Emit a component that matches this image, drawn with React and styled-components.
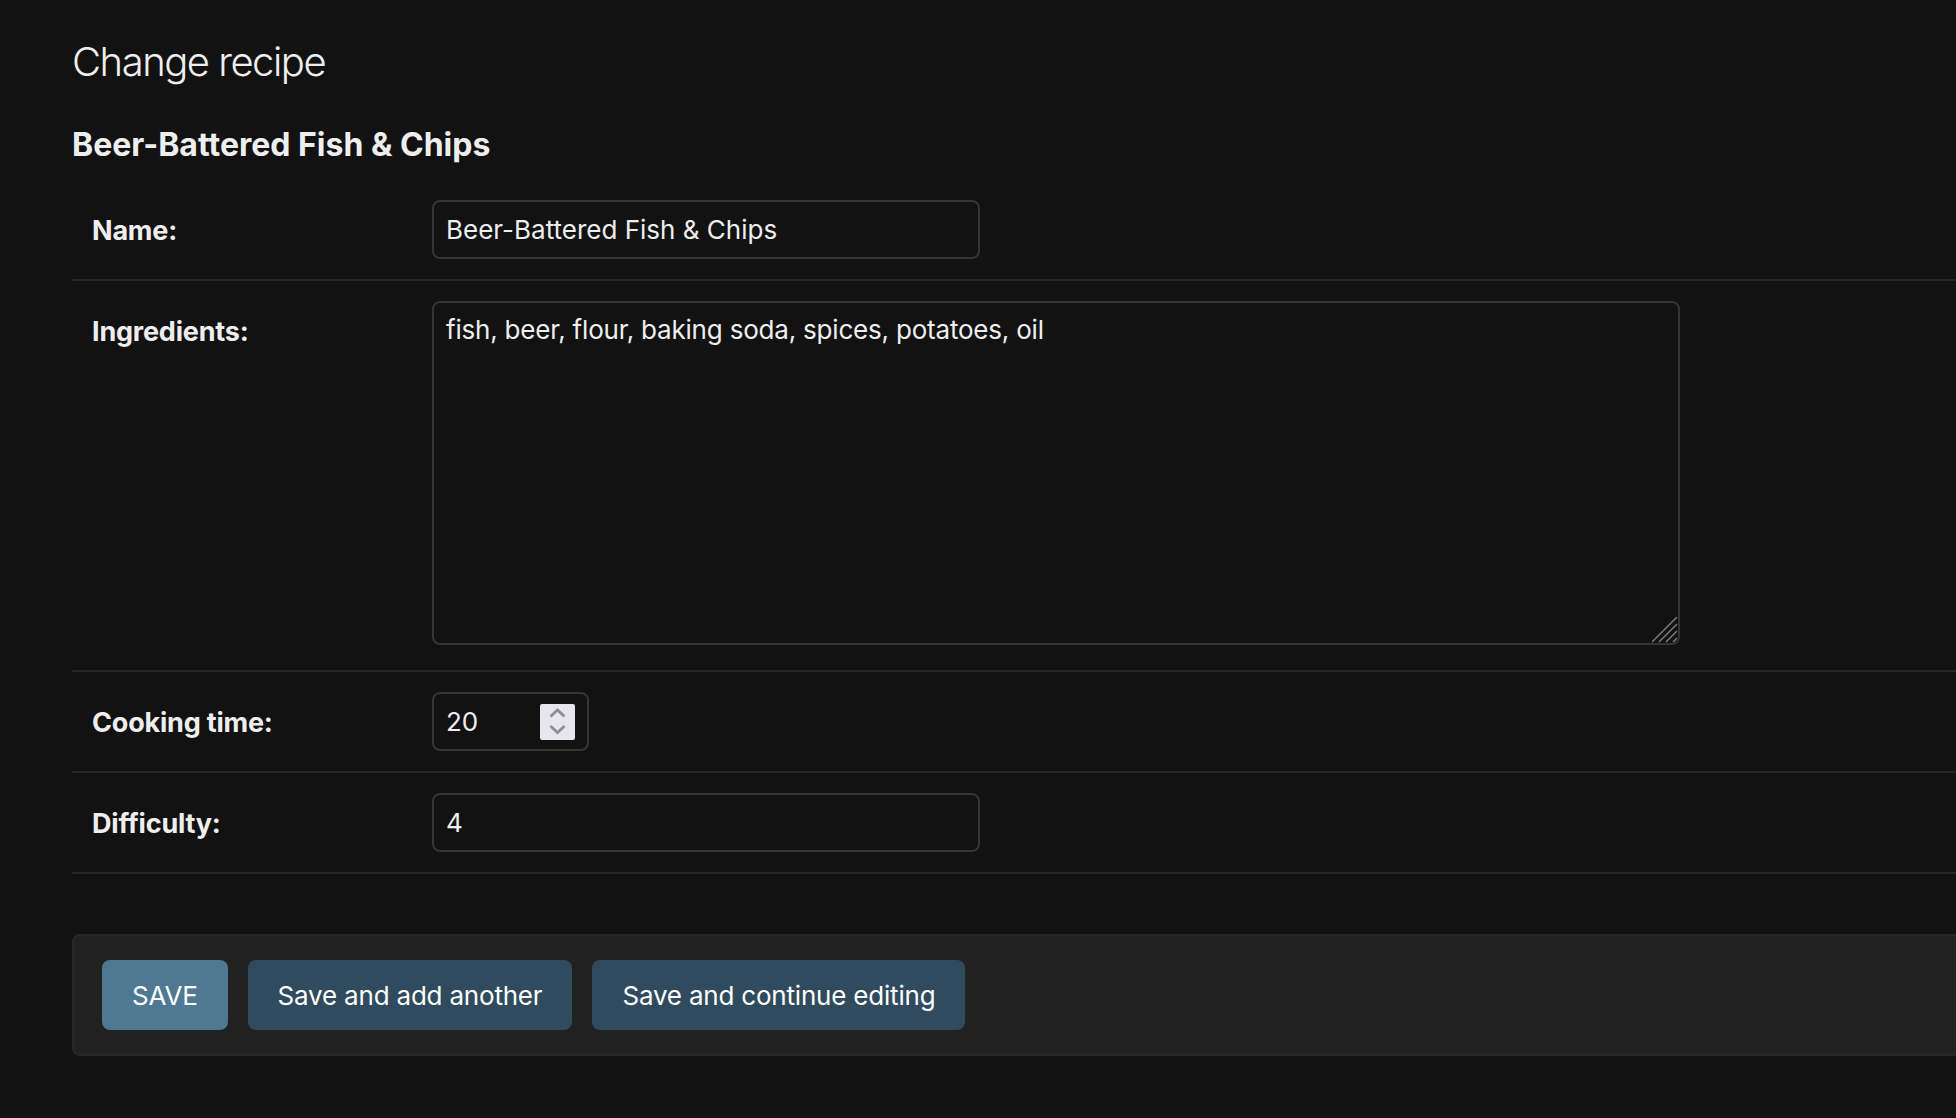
import React from "react";
import styled, { createGlobalStyle } from "styled-components";

const GlobalStyle = createGlobalStyle`
  html, body {
    margin: 0;
    padding: 0;
    background: #121212;
    overflow-x: hidden;
  }
  body {
    font-family: Inter, "Noto Sans", "Liberation Sans", sans-serif;
    color: #eeeeee;
  }
`;

const Page = styled.div`
  padding: 38px 0 0 72px;
`;

const Title = styled.h1`
  margin: 0;
  font-size: 40px;
  line-height: 48px;
  font-weight: 300;
  letter-spacing: -1.5px;
  color: #eeeeee;
`;

const Subtitle = styled.h2`
  margin: 39px 0 15px;
  font-size: 32px;
  line-height: 40px;
  font-weight: 700;
  color: #eeeeee;
`;

const Form = styled.form`
  margin-right: -12px;
`;

const Fieldset = styled.fieldset`
  margin: 0;
  padding: 0;
  border: none;
`;

const Row = styled.div`
  display: flex;
  align-items: flex-start;
  padding: 20px;
  border-bottom: 2px solid #272727;
`;

const Label = styled.label`
  width: 320px;
  min-width: 320px;
  padding: 13px 20px 0 0;
  font-size: 27px;
  line-height: 36px;
  font-weight: 700;
  letter-spacing: -0.2px;
  color: #eeeeee;
`;

const fieldBase = `
  box-sizing: border-box;
  margin: 0;
  border: 2px solid #353535;
  border-radius: 8px;
  background: #121212;
  color: #eeeeee;
  font-family: Inter, "Noto Sans", "Liberation Sans", sans-serif;
  font-size: 26px;
  line-height: 34px;
  outline: none;
`;

const TextInput = styled.input`
  ${fieldBase}
  width: ${(p) => p.$width}px;
  height: 59px;
  padding: 10px 12px;
`;

const AreaWrap = styled.div`
  position: relative;
  width: 1248px;
  height: 344px;
  margin-bottom: 5px;
`;

const TextArea = styled.textarea`
  ${fieldBase}
  display: block;
  width: 100%;
  height: 100%;
  padding: 10px 12px;
  letter-spacing: -0.2px;
  resize: none;
`;

const Grip = styled.svg`
  position: absolute;
  right: 2px;
  bottom: 2px;
`;

const NumberBox = styled.div`
  ${fieldBase}
  display: flex;
  align-items: center;
  width: 157px;
  height: 59px;
  padding: 0 12px;
`;

const NumberInput = styled.input`
  flex: 1;
  min-width: 0;
  border: none;
  background: transparent;
  color: #eeeeee;
  font-family: inherit;
  font-size: 26px;
  line-height: 34px;
  padding: 0;
  outline: none;
`;

const Spinner = styled.div`
  display: flex;
  width: 35px;
  height: 36px;
  background: #e7e6ec;
  border-radius: 2px;
`;

const SubmitRow = styled.div`
  display: flex;
  gap: 20px;
  margin-top: 60px;
  padding: 24px 28px;
  background: #212121;
  border: 2px solid #272727;
  border-radius: 8px;
`;

const Button = styled.button`
  height: 70px;
  padding: 0 30px;
  border: none;
  border-radius: 8px;
  background: ${(p) => (p.$primary ? "#4f7892" : "#2f4b5d")};
  color: #ffffff;
  font-family: Inter, "Noto Sans", "Liberation Sans", sans-serif;
  font-size: 26px;
  font-weight: 400;
  letter-spacing: -0.2px;
  text-transform: ${(p) => (p.$primary ? "uppercase" : "none")};
  cursor: pointer;
`;

function ResizeGrip() {
  return (
    <Grip width="26" height="26" viewBox="0 0 26 26">
      {[25, 18, 11, 4].map((l) => (
        <line
          key={l}
          x1={25 - l}
          y1="25"
          x2="25"
          y2={25 - l}
          stroke="#7d7d7d"
          strokeWidth="1.5"
        />
      ))}
    </Grip>
  );
}

function Stepper() {
  return (
    <Spinner>
      <svg width="35" height="36" viewBox="0 0 35 36">
        <polyline
          points="10.5,12.5 17.5,6 24.5,12.5"
          fill="none"
          stroke="#8e8e96"
          strokeWidth="2.8"
        />
        <polyline
          points="10.5,22 17.5,28.5 24.5,22"
          fill="none"
          stroke="#8e8e96"
          strokeWidth="2.8"
        />
      </svg>
    </Spinner>
  );
}

export default function App() {
  return (
    <Page>
      <GlobalStyle />
      <Title>Change recipe</Title>
      <Subtitle>Beer-Battered Fish &amp; Chips</Subtitle>
      <Form onSubmit={(e) => e.preventDefault()}>
        <Fieldset>
          <Row>
            <Label htmlFor="id_name">Name:</Label>
            <TextInput
              id="id_name"
              type="text"
              $width={548}
              defaultValue="Beer-Battered Fish & Chips"
            />
          </Row>
          <Row>
            <Label htmlFor="id_ingredients">Ingredients:</Label>
            <AreaWrap>
              <TextArea
                id="id_ingredients"
                defaultValue="fish, beer, flour, baking soda, spices, potatoes, oil"
              />
              <ResizeGrip />
            </AreaWrap>
          </Row>
          <Row>
            <Label htmlFor="id_cooking_time">Cooking time:</Label>
            <NumberBox>
              <NumberInput id="id_cooking_time" type="text" defaultValue="20" />
              <Stepper />
            </NumberBox>
          </Row>
          <Row>
            <Label htmlFor="id_difficulty">Difficulty:</Label>
            <TextInput
              id="id_difficulty"
              type="text"
              $width={548}
              defaultValue="4"
            />
          </Row>
        </Fieldset>
        <SubmitRow>
          <Button type="submit" $primary>
            Save
          </Button>
          <Button type="submit">Save and add another</Button>
          <Button type="submit">Save and continue editing</Button>
        </SubmitRow>
      </Form>
    </Page>
  );
}
